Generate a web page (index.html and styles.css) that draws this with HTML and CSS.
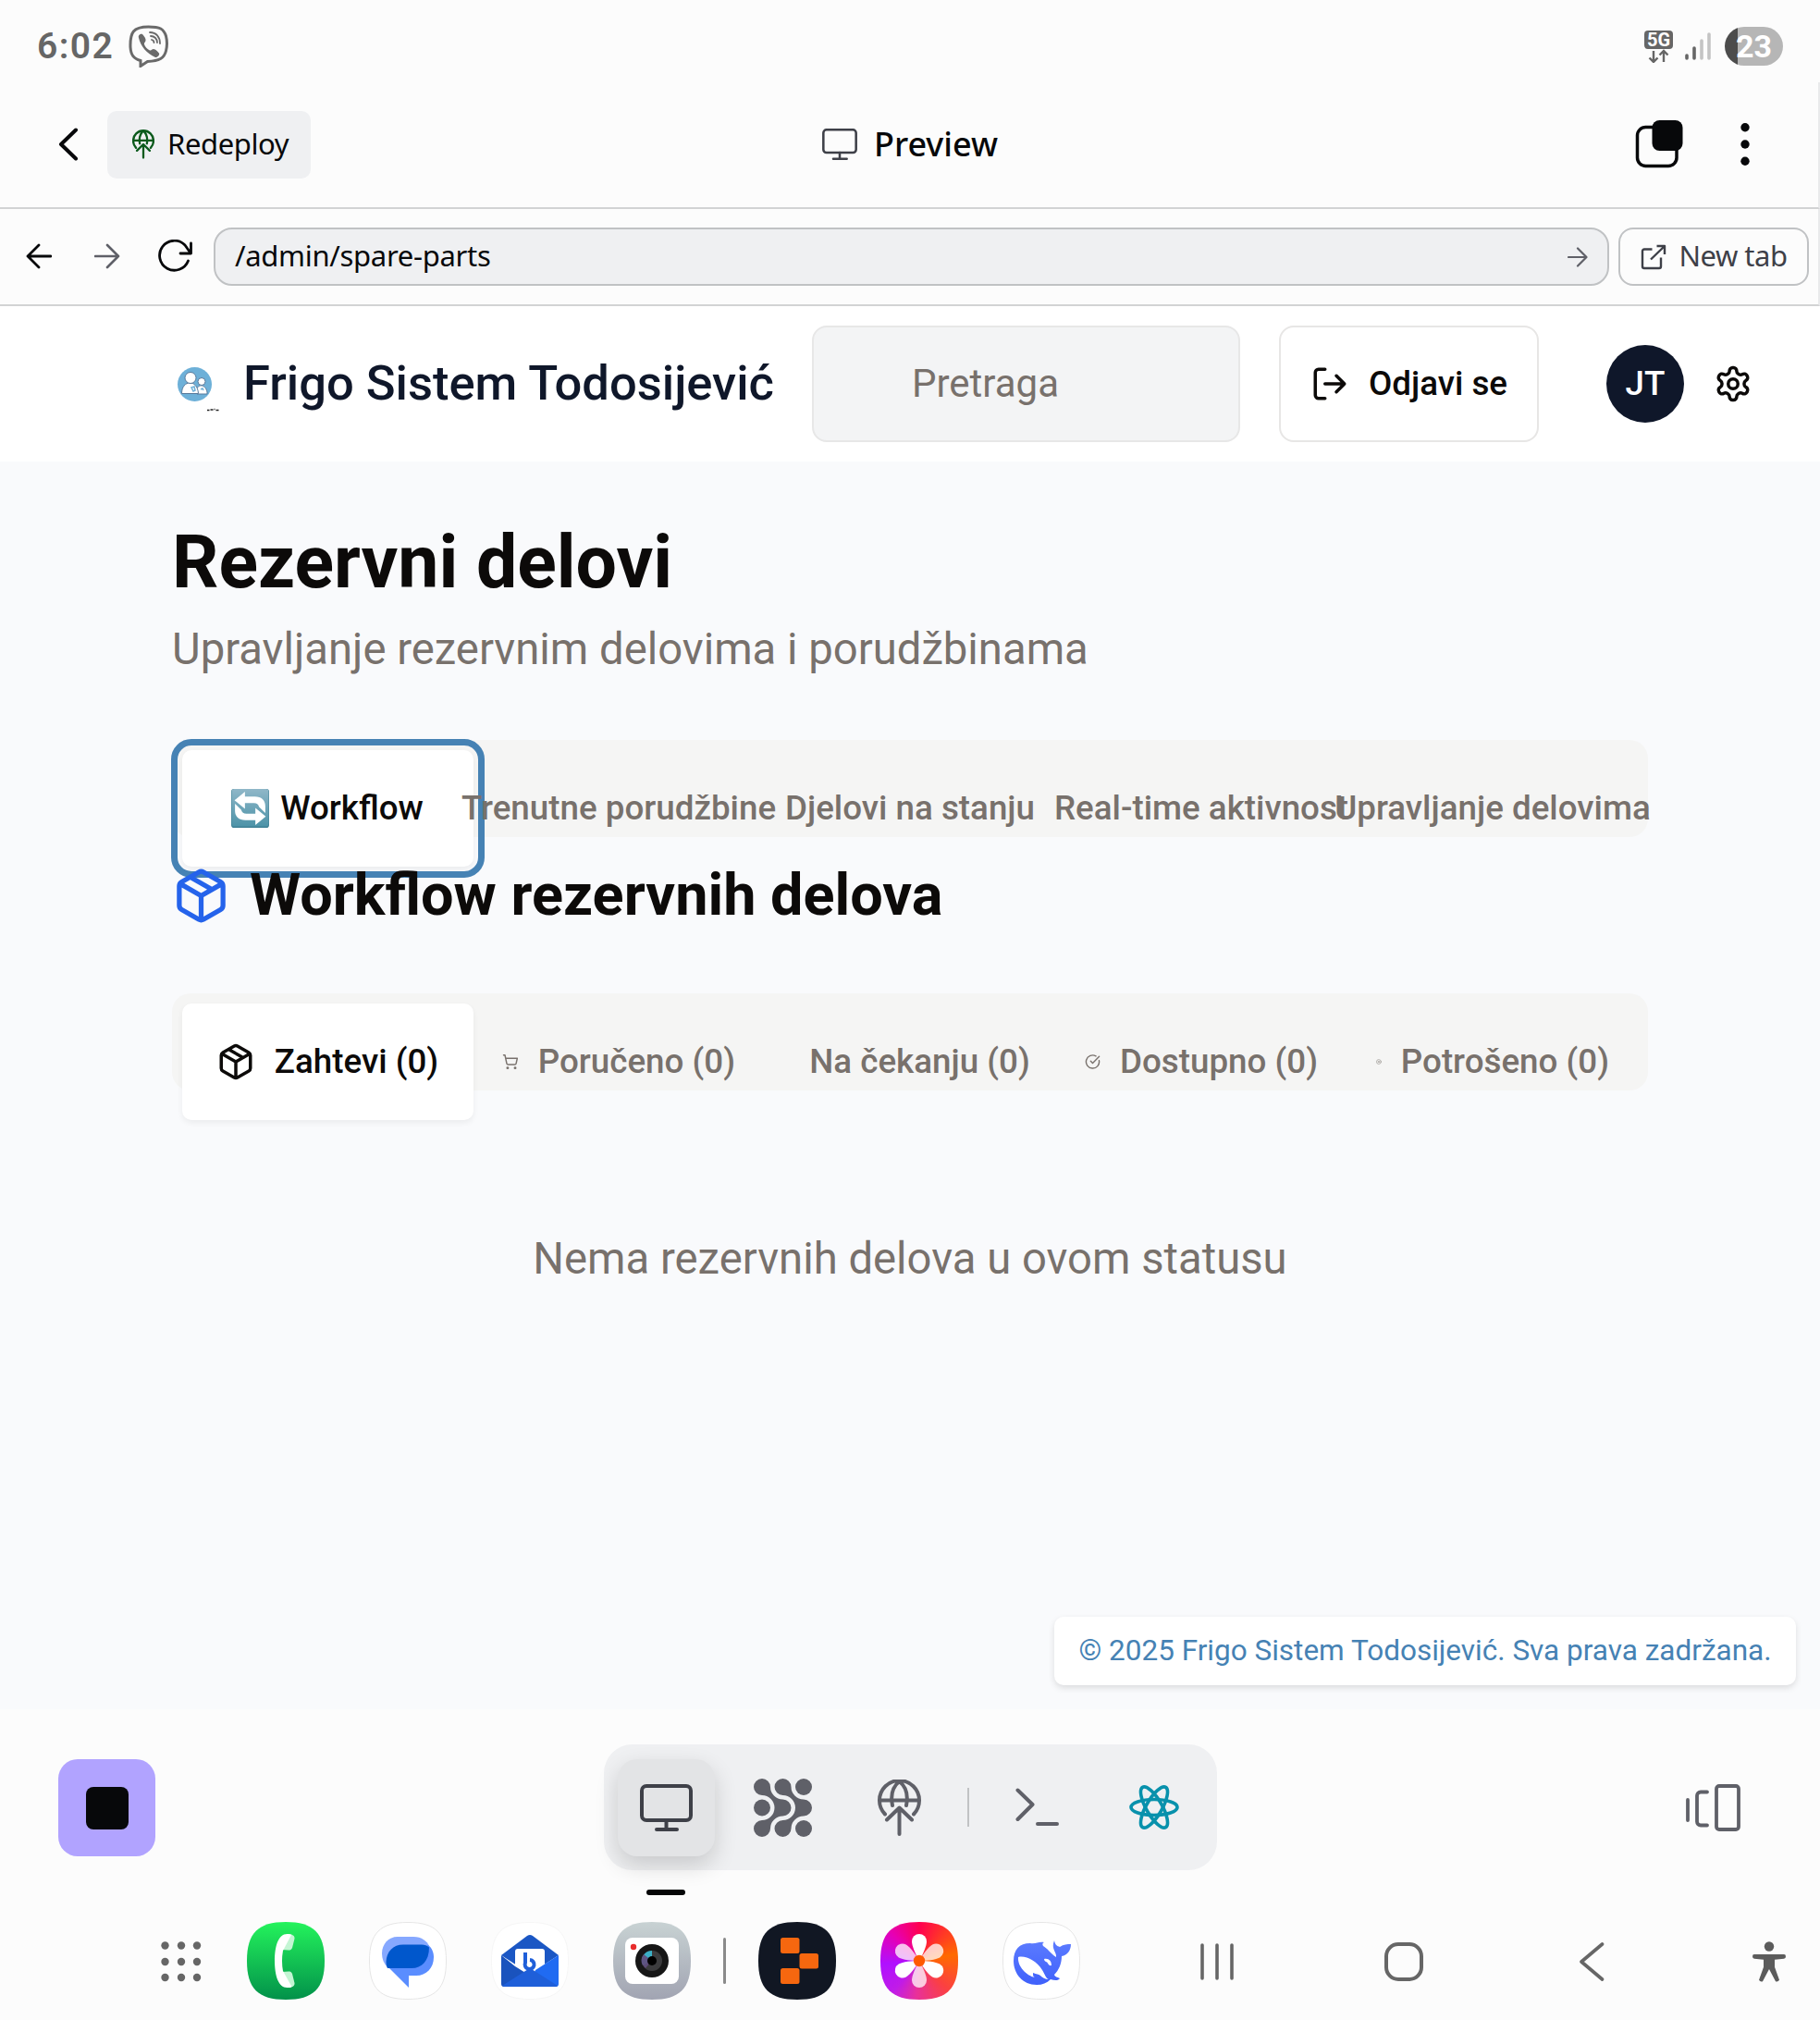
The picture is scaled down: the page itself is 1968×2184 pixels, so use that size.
FILE: index.html
```html
<!DOCTYPE html>
<html lang="sr">
<head>
<meta charset="utf-8">
<title>Rezervni delovi</title>
<link rel="stylesheet" href="styles.css">
</head>
<body>
<div class="status">
  <span class="clock">6:02</span>
  <svg class="viber" width="44" height="46" viewBox="0 0 44 46" fill="none" stroke="#6a6a6a" stroke-linecap="round"><path d="M21.500 2C34 2 38 4 40.500 12c1.500 6 1.500 10 0 16-2 8-7 11-20 11.500L13 44.500V38.500C5 36 2.500 32 2 24 1.500 8 5 2 21.500 2Z" stroke-width="3"/><path d="M11 14c-1-3 2-5 4-4 2 2 4 5 3.500 7s-2 2-1.500 4c1 3 3 5 6 6.500 2 .500 2-1.500 4-1.500s5 3 6 4.500c1 2-2 5-4 4.500C20 31 13 23 11 14Z" fill="#6a6a6a" stroke="none"/><path d="M23 8c7 0 11 5 11 12M24 12c4 0 7 3 7 7M25 16c2 .500 2.500 1.500 2.500 3" stroke-width="1.800"/></svg>
  <span class="spacer"></span>
  <svg class="net" width="31" height="35" viewBox="0 0 31 35"><rect width="31" height="20" rx="4" fill="#666"/><text x="15.500" y="17" text-anchor="middle" class="net-label">5G</text><path d="M10 22v12M5.500 29.500 10 34l4.500-4.500M21 34V22M16.500 26.500 21 22l4.500 4.500" fill="none" stroke="#666" stroke-width="2.400"/></svg>
  <svg class="signal" width="28" height="30" viewBox="0 0 28 30" stroke-width="3.600" stroke-linecap="round"><path d="M2 25v3M10 17v11" stroke="#666"/><path d="M18 9v19M26 2v26" stroke="#c4c4c4"/></svg>
  <span class="battery">23</span>
</div>

<div class="toolbar">
  <div class="tool-left">
    <svg width="22" height="36" viewBox="0 0 22 36" fill="none" stroke="#07080a" stroke-width="4" stroke-linecap="round" stroke-linejoin="round"><path d="M19 2.500 3 18l16 15.500"/></svg>
    <button class="redeploy"><svg width="24" height="32" viewBox="0 0 47 61" fill="none" stroke="#0b5a1c" stroke-width="4.500" stroke-linecap="round" stroke-linejoin="round"><path d="M8 38A21.500 21.500 0 1 1 39 38M2 22.500h43M23.500 2C17 8 14 18 16 29M23.500 2C30 8 33 18 31 29M23.500 59V31M10 44l13.500-13.500L37 44"/></svg><span>Redeploy</span></button>
  </div>
  <div class="tool-title"><svg width="38" height="34" viewBox="0 0 57 51" fill="none" stroke="#3e4048" stroke-width="3.800" stroke-linecap="round"><rect x="2" y="2" width="53" height="37" rx="5"/><path d="M28.500 39v10M18 49h22"/></svg><span>Preview</span></div>
  <div class="tool-right">
    <svg width="52" height="52" viewBox="0 0 52 52"><rect x="2.500" y="7.500" width="42.500" height="42" rx="9" fill="none" stroke="#07080a" stroke-width="3.500"/><rect x="18.500" y="0" width="33" height="33" rx="8" fill="#07080a"/></svg>
    <svg width="10" height="46" viewBox="0 0 10 46" fill="#07080a"><circle cx="5" cy="4.700" r="4.700"/><circle cx="5" cy="23" r="4.700"/><circle cx="5" cy="41.300" r="4.700"/></svg>
  </div>
</div>

<div class="urlbar">
  <svg class="nav-icon" width="28" height="28" viewBox="0 0 28 28" fill="none" stroke="#07080a" stroke-width="2.800" stroke-linecap="round" stroke-linejoin="round"><path d="M27 14H2M14 2 2 14l12 12"/></svg>
  <svg class="nav-icon" width="28" height="28" viewBox="0 0 28 28" fill="none" stroke="#5f6068" stroke-width="2.600" stroke-linecap="round" stroke-linejoin="round"><path d="M1 14h25M14 2l12 12-12 12"/></svg>
  <svg class="reload" width="40" height="36" viewBox="0 0 40 36" fill="none" stroke="#07080a" stroke-width="2.800" stroke-linecap="round" stroke-linejoin="round"><path d="M34.500 23A16 16 0 1 1 31 6l6 8.500M37.500 4v11H26"/></svg>
  <div class="url"><span>/admin/spare-parts</span><svg width="22" height="22" viewBox="0 0 22 22" fill="none" stroke="#5f6068" stroke-width="2.200" stroke-linecap="round" stroke-linejoin="round"><path d="M1 11h19M11 1.500l9.500 9.500-9.500 9.500"/></svg></div>
  <div class="newtab"><svg width="28" height="28" viewBox="0 0 28 28" fill="none" stroke="#3e4048" stroke-width="2.400" stroke-linejoin="round"><path d="M12.500 5.500H4a2 2 0 0 0-2 2V24a2 2 0 0 0 2 2h16a2 2 0 0 0 2-2V14.500M11 16.500 26 2M17.500 2H26v9"/></svg><span>New tab</span></div>
</div>

<header class="app-header">
  <div class="brand">
    <svg width="52" height="48" viewBox="0 0 52 48"><circle cx="23.500" cy="18.500" r="18.500" fill="#6db0d8"/><g fill="#fff" stroke="#56789a" stroke-width="1"><path d="M25 27c0-9 10-10 12 0v2H26Z"/><circle cx="31" cy="15.500" r="4"/><path d="M9.500 28.500c0-15 17-16 18 0Z"/><circle cx="19" cy="11.500" r="6"/></g><path d="M20 22l3-1 1 4-2 1ZM30 24l2-1 1 2" fill="none" stroke="#6db0d8" stroke-width="1.500"/><path d="M37 46.500h2.500m1-.500h3m1-.500h1m1 1h3" stroke="#222" stroke-width="1.600"/></svg>
    <span>Frigo Sistem Todosijević</span>
  </div>
  <div class="search">Pretraga</div>
  <div class="logout"><svg width="42" height="42" viewBox="0 0 24 24" fill="none" stroke="#0c0a09" stroke-width="2" stroke-linecap="round" stroke-linejoin="round"><path d="M9 21H5a2 2 0 0 1-2-2V5a2 2 0 0 1 2-2h4M16 17l5-5-5-5M21 12H9"/></svg><span>Odjavi se</span></div>
  <div class="avatar">JT</div>
  <svg width="42" height="42" viewBox="0 0 24 24" fill="none" stroke="#0c0a09" stroke-width="2" stroke-linecap="round" stroke-linejoin="round"><path d="M12.220 2h-.440a2 2 0 0 0-2 2v.180a2 2 0 0 1-1 1.730l-.430.250a2 2 0 0 1-2 0l-.150-.080a2 2 0 0 0-2.730.730l-.220.380a2 2 0 0 0 .730 2.730l.150.100a2 2 0 0 1 1 1.720v.510a2 2 0 0 1-1 1.740l-.150.090a2 2 0 0 0-.730 2.730l.220.380a2 2 0 0 0 2.730.730l.150-.080a2 2 0 0 1 2 0l.430.250a2 2 0 0 1 1 1.730V20a2 2 0 0 0 2 2h.440a2 2 0 0 0 2-2v-.180a2 2 0 0 1 1-1.730l.430-.250a2 2 0 0 1 2 0l.150.080a2 2 0 0 0 2.730-.730l.220-.390a2 2 0 0 0-.730-2.730l-.150-.080a2 2 0 0 1-1-1.740v-.500a2 2 0 0 1 1-1.740l.150-.090a2 2 0 0 0 .730-2.730l-.220-.380a2 2 0 0 0-2.730-.730l-.150.080a2 2 0 0 1-2 0l-.430-.250a2 2 0 0 1-1-1.730V4a2 2 0 0 0-2-2z"/><circle cx="12" cy="12" r="3"/></svg>
</header>

<main class="content">
  <h1>Rezervni delovi</h1>
  <p class="sub">Upravljanje rezervnim delovima i porudžbinama</p>
  <div class="tabs">
    <div class="tab active focused">
      <svg class="emoji" width="41" height="42" viewBox="0 0 40 41"><defs><linearGradient id="em" x1="0" y1="0" x2="0" y2="1"><stop offset="0" stop-color="#8fb7c8"/><stop offset="1" stop-color="#4d93a8"/></linearGradient></defs><rect width="40" height="41" rx="3" fill="#3f8195"/><rect x=".500" width="39" height="39.500" rx="3" fill="url(#em)"/><g fill="#fff"><path d="M3.500 12 14.500 3v5H25c7 0 11 4 11 10v7.500L29.500 19c-1-3-2.500-4-5.500-4h-9.500v6Z"/><path d="M3.500 12 14.500 3v5H25c7 0 11 4 11 10v7.500L29.500 19c-1-3-2.500-4-5.500-4h-9.500v6Z" transform="rotate(180 20 20.500)"/></g></svg>
      <span>Workflow</span></div>
    <div class="tab">Trenutne porudžbine</div>
    <div class="tab">Djelovi na stanju</div>
    <div class="tab">Real-time aktivnost</div>
    <div class="tab">Upravljanje delovima</div>
  </div>
  <h2><svg width="63" height="63" viewBox="0 0 24 24" fill="none" stroke="#2563eb" stroke-width="2" stroke-linecap="round" stroke-linejoin="round"><path d="M11 21.730a2 2 0 0 0 2 0l7-4A2 2 0 0 0 21 16V8a2 2 0 0 0-1-1.730l-7-4a2 2 0 0 0-2 0l-7 4A2 2 0 0 0 3 8v8a2 2 0 0 0 1 1.730zM12 22V12M3.300 7 12 12l8.700-5M7.500 4.270l9 5.150"/></svg><span>Workflow rezervnih delova</span></h2>
  <div class="tabs second">
    <div class="tab active"><svg width="42" height="42" viewBox="0 0 24 24"><path d="M11 21.730a2 2 0 0 0 2 0l7-4A2 2 0 0 0 21 16V8a2 2 0 0 0-1-1.730l-7-4a2 2 0 0 0-2 0l-7 4A2 2 0 0 0 3 8v8a2 2 0 0 0 1 1.730zM12 22V12M3.300 7 12 12l8.700-5M7.500 4.270l9 5.150"/></svg><span>Zahtevi (0)</span></div>
    <div class="tab"><svg width="42" height="42" viewBox="0 0 24 24"><circle cx="8" cy="21" r="1"/><circle cx="19" cy="21" r="1"/><path d="M2.050 2.050h2l2.660 12.420a2 2 0 0 0 2 1.580h9.780a2 2 0 0 0 1.950-1.570l1.650-7.430H5.120"/></svg><span>Poručeno (0)</span></div>
    <div class="tab"><svg width="42" height="42" viewBox="0 0 24 24"><circle cx="12" cy="12" r="10"/><path d="M12 6v6l4 2"/></svg><span>Na čekanju (0)</span></div>
    <div class="tab"><svg width="42" height="42" viewBox="0 0 24 24"><path d="M21.801 10A10 10 0 1 1 17 3.335M9 11l3 3L22 4"/></svg><span>Dostupno (0)</span></div>
    <div class="tab"><svg width="42" height="42" viewBox="0 0 24 24"><circle cx="12" cy="12" r="10"/><path d="m15 9-6 6M9 9l6 6"/></svg><span>Potrošeno (0)</span></div>
  </div>
  <p class="empty">Nema rezervnih delova u ovom statusu</p>
  <div class="copyright">© 2025 Frigo Sistem Todosijević. Sva prava zadržana.</div>
</main>

<div class="dock-row">
  <div class="stop"><i></i></div>
  <div class="dock">
    <div class="dock-active"><svg width="57" height="51" viewBox="0 0 57 51" fill="none" stroke="#3e4048" stroke-width="4" stroke-linecap="round"><rect x="2" y="2" width="53" height="37" rx="5"/><path d="M28.500 39v10M18 49h22"/></svg></div>
    <svg class="d-agents" width="63" height="63" viewBox="0 0 63 63" fill="#5f6068"><path d="M9 18A9 9 0 1 1 18 9 13.500 13.500 0 0 0 31.500 22.500 9 9 0 0 1 31.500 40.500 13.500 13.500 0 0 0 18 54 9 9 0 1 1 9 45 13.500 13.500 0 0 0 9 18Z"/><path d="M31.500 18A9 9 0 1 1 40.500 9 13.500 13.500 0 0 0 54 22.500 9 9 0 0 1 54 40.500 13.500 13.500 0 0 0 40.500 54 9 9 0 1 1 31.500 45 13.500 13.500 0 0 0 31.500 18Z"/><circle cx="9" cy="31.500" r="9"/><circle cx="54" cy="9" r="9"/><circle cx="54" cy="54" r="9"/></svg>
    <svg class="d-globe" width="47" height="61" viewBox="0 0 47 61" fill="none" stroke="#5f6068" stroke-width="4" stroke-linecap="round" stroke-linejoin="round"><path d="M8 37.500A21.500 21.500 0 1 1 39 37.500M2 22.500h43M23.500 2C16 8 14 18 16 28M23.500 2C31 8 33 18 31 28M23.500 59V31M10 43.500l13.500-13 13.500 13"/></svg>
    <i class="d-line"></i>
    <svg class="d-term" width="47" height="42" viewBox="0 0 47 42" fill="none" stroke="#5f6068" stroke-width="4" stroke-linecap="round" stroke-linejoin="round"><path d="M2.500 2.500 18.500 18l-16 16M24 39h21"/></svg>
    <svg class="d-react" width="54" height="50" viewBox="0 0 54 50" fill="none" stroke="#0891ac" stroke-width="3.600"><g transform="translate(27 25)"><ellipse rx="25" ry="8.500"/><ellipse rx="25" ry="8.500" transform="rotate(60)"/><ellipse rx="25" ry="8.500" transform="rotate(120)"/></g></svg>
  </div>
  <svg class="tabs-icon" width="59" height="51" viewBox="0 0 59 51" fill="none" stroke="#5f6068" stroke-width="3.800" stroke-linecap="round"><path d="M2 17v22M23 8.500h-7a4 4 0 0 0-4 4v28a4 4 0 0 0 4 4h7"/><rect x="33" y="2" width="24" height="47" rx="3"/></svg>
</div>
<div class="indicator"></div>

<div class="taskbar">
  <svg class="apps" width="44" height="44" viewBox="0 0 44 44" fill="#666"><circle cx="4.500" cy="4.500" r="4.200"/><circle cx="22" cy="4.500" r="4.200"/><circle cx="39" cy="4.500" r="4.200"/><circle cx="4.500" cy="22" r="4.200"/><circle cx="22" cy="22" r="4.200"/><circle cx="39" cy="22" r="4.200"/><circle cx="4.500" cy="39" r="4.200"/><circle cx="22" cy="39" r="4.200"/><circle cx="39" cy="39" r="4.200"/></svg>
  <svg class="app" viewBox="0 0 84 84"><defs><linearGradient id="ph" x2="0" y2="1"><stop stop-color="#24f35c"/><stop offset="1" stop-color="#02914a"/></linearGradient></defs><path fill="url(#ph)" d="M42 0C72 0 84 12 84 42S72 84 42 84 0 72 0 42 12 0 42 0Z"/><path d="M38 30 44 13c5 0 8 2 7.500 5L49 28c-1 2-2 2.500-4 2.500ZM38 54l6 17c5 0 8-2 7.500-5L49 56c-1-2-2-2.500-4-2.500Z" fill="#c4f5d4"/><path d="M43.500 13C34 13 30 26 30 42s4 29 13.500 29c2 0 4 0 5-1L39 53q-2-11 0-22l9-17c-1-1-3-1-4.500-1Z" fill="#fff"/></svg>
  <svg class="app" viewBox="0 0 84 84"><path fill="#fff" stroke="#e6e6e6" d="M42 .500C72 .500 83.500 12 83.500 42S72 83.500 42 83.500 .500 72 .500 42 12 .500 42 .500Z"/><path fill="#86a8ff" d="M31 16h17c9 0 15 5 17 10L20 49c-4-4-6-9-6-15 0-10 7-18 17-18Z"/><path fill="#5a8dff" d="M64 25c4 3 6 8 6 13 0 12-8 20-19 20h-8v13L22 50c-2-2-3-5-3-8Z"/><path fill="#0057cc" d="M37 24.500h20c3 0 6 1 8 3C65 42 57 50 46 50H20c-1-2-1.500-4-1.500-7C19 32 26 24.500 37 24.500Z"/></svg>
  <svg class="app" viewBox="0 0 84 84"><path fill="#fff" stroke="#f6f6f6" d="M42 .500C72 .500 83.500 12 83.500 42S72 83.500 42 83.500 .500 72 .500 42 12 .500 42 .500Z"/><path fill="#1b57c4" d="M11 36 39 15q3-2 6 0l28 21-31 20Z"/><rect x="26" y="29" width="32" height="30" rx="3" fill="#fff"/><path fill="#1a53bd" d="M11 36v31q0 3 3 3h26l2-12L26 48Z"/><path fill="#206bf2" d="M73 36v31q0 3-3 3H40l8-18Z"/><path fill="#1f5fd9" d="M12 69 37 53q5-4 10 0l25 16q-1 1-3 1H14Z"/><path d="M37 33v11a5 5 0 1 0 5-3" fill="none" stroke="#1f5fd9" stroke-width="4"/></svg>
  <svg class="app" viewBox="0 0 84 84"><defs><linearGradient id="cam" x2="0" y2="1"><stop stop-color="#c8d2d3"/><stop offset="1" stop-color="#a1a4b2"/></linearGradient></defs><path fill="url(#cam)" d="M42 0C72 0 84 12 84 42S72 84 42 84 0 72 0 42 12 0 42 0Z"/><rect x="13" y="17" width="58" height="50" rx="8" fill="#fff"/><circle cx="22" cy="27" r="3.200" fill="#e82c2c"/><circle cx="42" cy="42" r="18" fill="#161616"/><circle cx="42" cy="42" r="11" fill="#3c3c3e"/><path fill="#5d4c78" d="M42 42H31a11 11 0 0 0 4 8Z"/><path fill="#3bb0c6" d="M42 42V31a11 11 0 0 0-11 11Z"/><path fill="#5e5583" d="M42 42 33 35a11 11 0 0 0-1 12Z"/><circle cx="42" cy="42" r="5" fill="#000"/></svg>
  <i class="task-line"></i>
  <svg class="app" viewBox="0 0 84 84"><path fill="#111723" d="M42 0C72 0 84 12 84 42S72 84 42 84 0 72 0 42 12 0 42 0Z"/><g fill="#f6670f"><rect x="24" y="17" width="20.500" height="17" rx="2.500"/><rect x="44.500" y="34" width="20.500" height="16.500" rx="2.500"/><rect x="24" y="50" width="20.500" height="17" rx="2.500"/></g></svg>
  <div class="app gallery"><svg width="84" height="84" viewBox="0 0 84 84" fill="#fff"><defs><path id="petal" d="M42 42C38 35 34 26 34 21a8 8 0 0 1 16 0c0 5-4 14-8 21Z"/></defs><g opacity=".75"><use href="#petal" transform="rotate(60 42 42)"/><use href="#petal" transform="rotate(180 42 42)"/><use href="#petal" transform="rotate(300 42 42)"/></g><use href="#petal"/><use href="#petal" transform="rotate(120 42 42)"/><use href="#petal" transform="rotate(240 42 42)"/><circle cx="42" cy="42" r="6.200" fill="#ff5a00"/></svg></div>
  <svg class="app" viewBox="0 0 84 84"><defs><linearGradient id="wh" x2="0" y2="1"><stop stop-color="#5c7bff"/><stop offset="1" stop-color="#3f61fb"/></linearGradient></defs><path fill="#fff" stroke="#e6e6e6" d="M42 .500C72 .500 83.500 12 83.500 42S72 83.500 42 83.500 .500 72 .500 42 12 .500 42 .500Z"/><path fill="url(#wh)" d="M12 42C12 30 18 23 30 23c6 1 9-2 15-1-2 1-2 2-1 4 4 2 8 8 14 12C59 33 52 29 56 20c1 5 3 6 6 7 4-3 8-3 12-3 0 7-4 12-10 13 0 8-3 15-8 20 1 3 3 2 6 4-2 3-6 2-10 1-4 4-9 6-15 6-15 0-25-12-25-26Z"/><path fill="#fff" d="M17 38c8-2 20 4 26 14 3 5 4 9 7 10-4 0-7-2-9-4s-4-1-8-3c0 3 0 4 2 5-9-2-19-12-18-22ZM45 40c5-1 8 2 8 7-3 1-4-3-5-3.500s-3-1-3-3.500Z"/></svg>
  <svg class="recents" width="36" height="40" viewBox="0 0 36 40" stroke="#666" stroke-width="3.600" stroke-linecap="round"><path d="M2 2v36M18 2v36M34 2v36"/></svg>
  <svg class="home" width="42" height="42" viewBox="0 0 42 42" fill="none" stroke="#666" stroke-width="4"><rect x="2" y="2" width="38" height="38" rx="13"/></svg>
  <svg class="back" width="28" height="42" viewBox="0 0 28 42" fill="none" stroke="#666" stroke-width="3.600" stroke-linecap="round" stroke-linejoin="round"><path d="M25.500 2 3 21l22.500 19"/></svg>
  <svg class="a11y" width="36" height="44" viewBox="0 0 36 44" fill="#5c5c5c"><circle cx="18" cy="5.500" r="5.200"/><path d="M2 14h32q2 0 2 2.200T34 18.800l-10 1v8l5 14q-1.500 2.500-4 1.500L18 30l-7 13.300q-2.500 1-4-1.500l5-14v-8l-10-1Q0 18.500 0 16.200T2 14Z"/></svg>
</div>
</body>
</html>
```
FILE: styles.css
```css
* { box-sizing: border-box; }
body { margin: 0; width: 1968px; height: 2184px; overflow: hidden; background: #fcfcfc; font-family: Roboto, "Noto Sans", sans-serif; display: flex; flex-direction: column; }
svg { display: block; flex: none; }
h1, h2, p { margin: 0; }

.status { height: 89px; padding: 11px 40px 0 40px; display: flex; align-items: center; }
.clock { font-size: 39px; font-weight: 600; color: #666; letter-spacing: 1.4px; }
.viber { margin-left: 16px; }
.spacer { flex: 1; }
.net-label { font: 700 20px Roboto, sans-serif; fill: #fff; }
.signal { margin: 0 15px 0 13px; }
.battery { width: 63px; height: 42px; border-radius: 21px; background: linear-gradient(90deg, #4c4c4c 14px, #b6b6b6 14px); color: #fff; font-size: 34px; font-weight: 700; line-height: 43px; text-align: center; }

.toolbar { height: 137px; display: grid; grid-template-columns: 1fr auto 1fr; align-items: center; padding: 0 74px 2px 63px; border-bottom: 2px solid #d2d3d4; border-right: 2px solid #e9eaeb; font-family: "Noto Sans", sans-serif; color: #07080a; }
.tool-left { display: flex; align-items: center; gap: 31px; padding-top: 1px; }
.redeploy { width: 220px; height: 73px; border: 0; border-radius: 10px; background: #eff0f2; display: flex; align-items: center; padding: 0 0 0 27px; gap: 14px; font: 400 31px "Noto Sans", sans-serif; color: #07080a; letter-spacing: -.4px; }
.redeploy span { padding-bottom: 3px; }
.tool-title { display: flex; align-items: center; gap: 18px; font-size: 36px; font-weight: 500; padding-left: 13px; }
.tool-right { display: flex; align-items: center; justify-content: flex-end; gap: 62px; }

.urlbar { height: 105px; display: flex; align-items: center; padding: 0 10px 0 28px; border-bottom: 2px solid #d2d3d4; border-right: 2px solid #e9eaeb; font: 400 31px "Noto Sans", sans-serif; color: #07080a; }
.nav-icon { margin: -2px 46px 0 0; }
.nav-icon + .nav-icon { margin-right: 39px; }
.reload { margin: -1px 22px 0 0; }
.url { flex: 1; height: 63px; border: 2px solid #c0c2c4; border-radius: 20px; background: #eff0f2; display: flex; align-items: center; justify-content: space-between; padding: 0 21px; letter-spacing: -.3px; }
.url span, .newtab span { padding-bottom: 3px; }
.newtab { width: 206px; height: 63px; margin-left: 10px; border: 2px solid #c0c2c4; border-radius: 16px; display: flex; align-items: center; justify-content: center; gap: 14px; color: #3e4048; letter-spacing: -.5px; }

.app-header { height: 168px; background: #fff; padding-left: 187px; display: flex; align-items: center; }
.brand { width: 691px; display: flex; align-items: center; gap: 24px; font-size: 52.5px; font-weight: 500; color: #0f172a; white-space: nowrap; }
.brand svg { margin-top: 11px; }
.brand span, .logout span { padding-bottom: 2px; }
.search { width: 463px; height: 126px; margin-right: 42px; border: 2px solid #e7e7e7; border-radius: 16px; background: #f3f4f5; padding-left: 106px; font-size: 42px; line-height: 121px; color: #78716c; }
.logout { width: 281px; height: 126px; margin-right: 73px; border: 2px solid #e7e6e5; border-radius: 16px; display: flex; align-items: center; justify-content: center; gap: 21px; font-size: 36.75px; font-weight: 500; color: #0c0a09; }
.avatar { width: 84px; height: 84px; margin-right: 32px; border-radius: 50%; background: #0f172a; color: #fff; font-size: 36.75px; font-weight: 500; line-height: 84px; text-align: center; }

.content { height: 1349px; background: #f9fafc; padding: 62px 186px 0 186px; position: relative; }
h1 { font-size: 78.75px; line-height: 94px; font-weight: 700; color: #0c0a09; }
.sub { margin-top: 11px; font-size: 47.25px; line-height: 73px; color: #78716c; }
.tabs { margin-top: 61px; height: 105px; padding: 10.5px; background: #f5f5f4; border-radius: 20px; display: grid; grid-template-columns: repeat(5, minmax(0, 1fr)); }
.tab { height: 126px; padding: 0 31.5px; display: flex; align-items: center; justify-content: center; white-space: nowrap; font-size: 36.75px; font-weight: 500; color: #78716c; position: relative; }
.tab svg { flex: 0 1 42px; min-width: 0; margin-right: 21px; fill: none; stroke: currentColor; stroke-width: 2; stroke-linecap: round; stroke-linejoin: round; }
.tab.active { background: #fff; color: #0c0a09; border-radius: 10px; box-shadow: 0 3px 6px rgba(0, 0, 0, .06); }
.tab.focused { outline: 7px solid #4682b4; outline-offset: 5px; }
.tab .emoji { flex: none; margin-right: 12px; stroke: none; }
h2 { margin-top: 21px; height: 84px; display: flex; align-items: center; gap: 21px; font-size: 63px; font-weight: 700; color: #0c0a09; position: relative; }
h2 span { padding-bottom: 2px; }
.tabs.second { margin-top: 64px; }
.empty { margin-top: 146px; font-size: 47.25px; line-height: 73px; color: #78716c; text-align: center; }
.copyright { position: absolute; right: 26px; bottom: 26px; width: 802px; height: 74px; border-radius: 10px; background: #fff; box-shadow: 0 3px 7px rgba(0, 0, 0, .12); color: #4682b4; font-size: 31.5px; line-height: 74px; text-align: center; white-space: nowrap; }

.dock-row { height: 174px; padding: 38px 86px 0 63px; display: flex; align-items: flex-start; justify-content: space-between; }
.stop { width: 105px; height: 105px; margin-top: 16px; border-radius: 21px; background: #b1a3ff; display: grid; place-items: center; }
.stop i { width: 46px; height: 46px; border-radius: 8px; background: #07080a; }
.dock { width: 663px; height: 136px; margin-right: 23px; border-radius: 31px; background: #eff0f2; display: flex; align-items: center; padding-left: 15.5px; }
.dock-active { width: 105px; height: 105px; border-radius: 21px; background: #e3e4e6; box-shadow: 0 10px 24px rgba(0, 0, 0, .16); display: grid; place-items: center; }
.d-agents { margin-left: 42px; }
.d-globe { margin-left: 71px; }
.d-line { width: 2px; height: 42px; background: #c0c2c4; margin-left: 50px; }
.d-term { margin-left: 50px; }
.d-react { margin-left: 76px; }
.tabs-icon { margin-top: 43px; }
.indicator { width: 42px; height: 6px; margin: 21px 0 0 699px; border-radius: 3px; background: #050607; }

.taskbar { height: 84px; margin-top: 29px; padding-left: 174px; display: flex; align-items: center; }
.apps { margin: 2px 49px 0 0; }
.app { width: 84px; height: 84px; margin-right: 48px; flex: none; }
.task-line { width: 3px; height: 50px; margin: 0 35px 0 -13px; border-radius: 2px; background: #8a8a8a; }
.gallery { clip-path: path("M42 0C72 0 84 12 84 42S72 84 42 84 0 72 0 42 12 0 42 0Z"); background: conic-gradient(#ff0050, #ff6a00 80deg, #fb4141 135deg, #e8309a 185deg, #c01ce8 220deg, #b010ff 265deg, #e600b4 315deg, #ff0050); }
.recents { margin: 2px 0 0 82px; }
.home { margin: 2px 0 0 163px; }
.back { margin: 2px 0 0 168px; }
.a11y { margin: 2px 0 0 160px; }
```
